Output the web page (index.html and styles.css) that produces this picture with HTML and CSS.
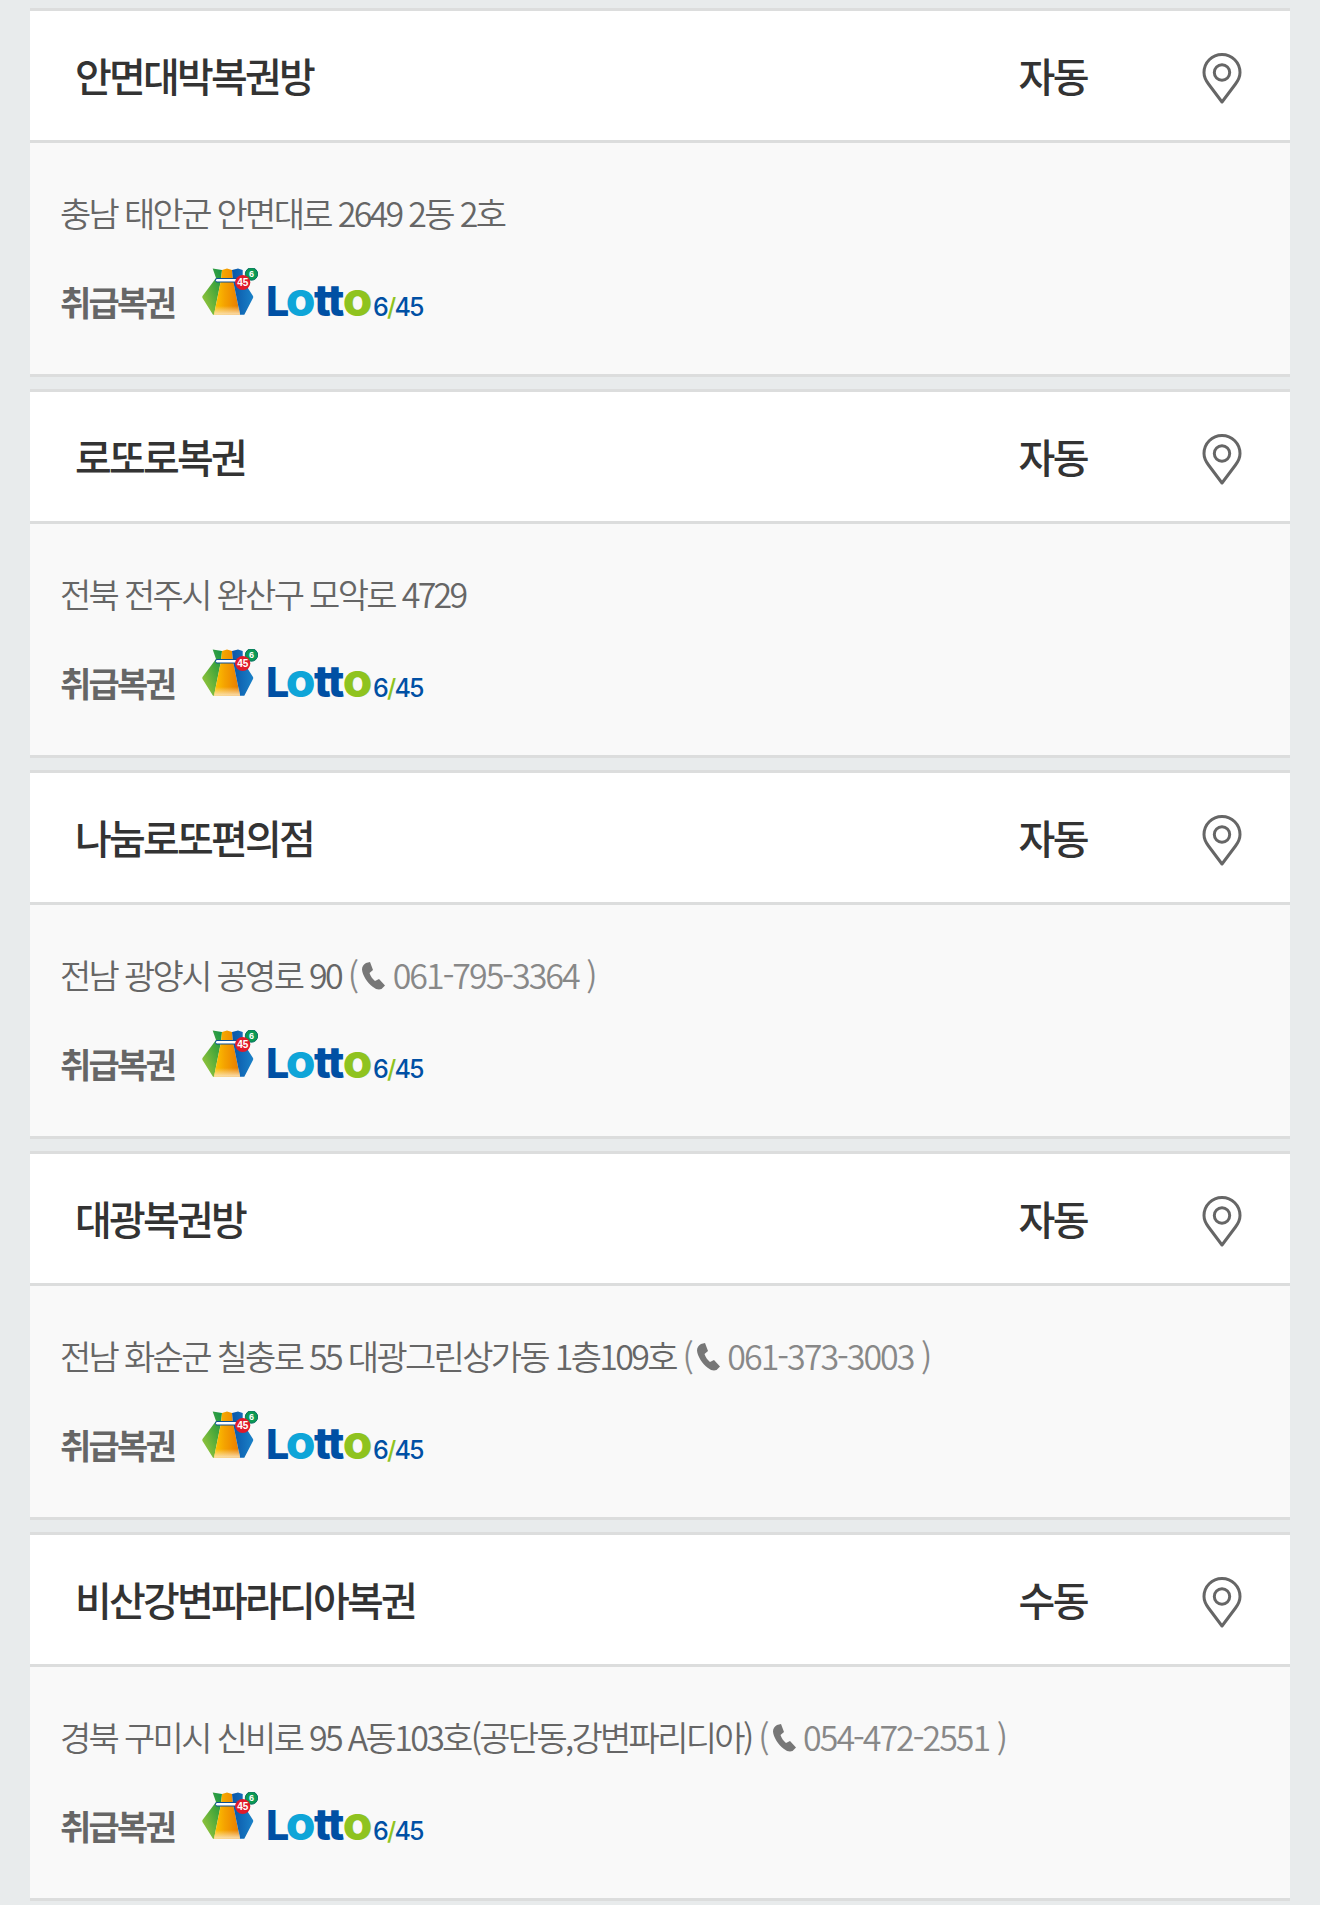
FILE: index.html
```html
<!DOCTYPE html>
<html lang="ko">
<head>
<meta charset="utf-8">
<title>판매점</title>
<link rel="stylesheet" href="styles.css">
</head>
<body>
<svg class="defs" width="0" height="0" aria-hidden="true">
  <defs>
    <linearGradient id="g1" x1="0" y1="1" x2="1" y2="0"><stop offset="0" stop-color="#a8cc3c"/><stop offset=".6" stop-color="#4aa83a"/><stop offset="1" stop-color="#12924a"/></linearGradient>
    <linearGradient id="g2" x1="0" y1="0" x2="1" y2="0"><stop offset="0" stop-color="#fdc800"/><stop offset=".4" stop-color="#f5a300"/><stop offset="1" stop-color="#e87a00"/></linearGradient>
    <linearGradient id="g3" x1="0" y1="0" x2="1" y2="0"><stop offset="0" stop-color="#0a55a8"/><stop offset="1" stop-color="#1a82c8"/></linearGradient>
    <linearGradient id="g4" x1="0" y1="0" x2="0" y2="1"><stop offset="0" stop-color="#fbe0b0" stop-opacity="0"/><stop offset="1" stop-color="#fbe0b0"/></linearGradient>
    <symbol id="bag" viewBox="0 0 56 48">
      <path d="M10.700 0.500 L20 2 L19 12 L12 46.700 L11 46.700 L0.500 30 Q0 29 0.500 28 L14 10Z" fill="url(#g1)"/>
      <path d="M20 2 L25 0.500 L30 2 L31 12 L38 46.700 L12 46.700 L19 12Z" fill="url(#g2)"/>
      <path d="M30 2 L36 0.500 L40.700 2 L40.700 12 L51 28 Q51.500 29 51 30 L42.300 46.700 L38 46.700 L31 12Z" fill="url(#g3)"/>
      <path d="M14 38 L37 38 L38 46.700 L12 46.700Z" fill="url(#g4)"/>
      <rect x="13.500" y="10.500" width="24" height="3.500" rx="1.500" fill="#fff" stroke="#0a4f94" stroke-width="1"/>
      <circle cx="49.500" cy="6" r="6.200" fill="#0b9a52" stroke="#0a6f66" stroke-width="1"/>
      <circle cx="40.700" cy="14.500" r="7.600" fill="#e01a2b"/>
      <text x="40.700" y="18" class="ball">45</text>
      <text x="49.500" y="9" class="ball ball-small">6</text>
    </symbol>
    <symbol id="pin" viewBox="0 0 40 52">
      <path d="M20 50 L6.500 32 C3.500 28 2 25 2 20.500 C2 10.500 10 2.500 20 2.500 C30 2.500 38 10.500 38 20.500 C38 25 36.500 28 33.500 32Z" fill="none" stroke="#666" stroke-width="3" stroke-linejoin="round"/>
      <circle cx="20" cy="20.500" r="7.700" fill="none" stroke="#666" stroke-width="3"/>
    </symbol>
    <symbol id="phone" viewBox="0 0 24 28">
      <path d="M5 1 L9 0 L12 8 L8.500 11 C9.500 14 11.500 17 14 19 L18 17 L24 23.500 L20.500 27 C18 28 15 27.500 12 25 C6 20.500 1.500 13 1 7.500 C1 4.500 2.500 2.500 5 1Z" fill="#777"/>
    </symbol>
  </defs>
</svg>
<main class="list">
  <article class="card">
    <header class="head"><h2 class="name">안면대박복권방</h2><span class="mode">자동</span><svg class="pin"><use href="#pin"/></svg></header>
    <div class="body">
      <p class="addr">충남 태안군 안면대로 2649 2동 2호</p>
      <div class="sold"><strong class="label">취급복권</strong><span class="logo"><svg class="bag"><use href="#bag"/></svg><span class="lotto"><b class="l-l">L</b><b class="l-o1">o</b><b class="l-t">tt</b><b class="l-o2">o</b></span><span class="game">6<i>/</i>45</span></span></div>
    </div>
  </article>
  <article class="card">
    <header class="head"><h2 class="name">로또로복권</h2><span class="mode">자동</span><svg class="pin"><use href="#pin"/></svg></header>
    <div class="body">
      <p class="addr">전북 전주시 완산구 모악로 4729</p>
      <div class="sold"><strong class="label">취급복권</strong><span class="logo"><svg class="bag"><use href="#bag"/></svg><span class="lotto"><b class="l-l">L</b><b class="l-o1">o</b><b class="l-t">tt</b><b class="l-o2">o</b></span><span class="game">6<i>/</i>45</span></span></div>
    </div>
  </article>
  <article class="card">
    <header class="head"><h2 class="name">나눔로또편의점</h2><span class="mode">자동</span><svg class="pin"><use href="#pin"/></svg></header>
    <div class="body">
      <p class="addr">전남 광양시 공영로 90 <span class="tel">(<svg class="phone"><use href="#phone"/></svg> 061-795-3364 )</span></p>
      <div class="sold"><strong class="label">취급복권</strong><span class="logo"><svg class="bag"><use href="#bag"/></svg><span class="lotto"><b class="l-l">L</b><b class="l-o1">o</b><b class="l-t">tt</b><b class="l-o2">o</b></span><span class="game">6<i>/</i>45</span></span></div>
    </div>
  </article>
  <article class="card">
    <header class="head"><h2 class="name">대광복권방</h2><span class="mode">자동</span><svg class="pin"><use href="#pin"/></svg></header>
    <div class="body">
      <p class="addr">전남 화순군 칠충로 55 대광그린상가동 1층109호 <span class="tel">(<svg class="phone"><use href="#phone"/></svg> 061-373-3003 )</span></p>
      <div class="sold"><strong class="label">취급복권</strong><span class="logo"><svg class="bag"><use href="#bag"/></svg><span class="lotto"><b class="l-l">L</b><b class="l-o1">o</b><b class="l-t">tt</b><b class="l-o2">o</b></span><span class="game">6<i>/</i>45</span></span></div>
    </div>
  </article>
  <article class="card">
    <header class="head"><h2 class="name">비산강변파라디아복권</h2><span class="mode">수동</span><svg class="pin"><use href="#pin"/></svg></header>
    <div class="body">
      <p class="addr">경북 구미시 신비로 95 A동103호(공단동,강변파리디아) <span class="tel">(<svg class="phone"><use href="#phone"/></svg> 054-472-2551 )</span></p>
      <div class="sold"><strong class="label">취급복권</strong><span class="logo"><svg class="bag"><use href="#bag"/></svg><span class="lotto"><b class="l-l">L</b><b class="l-o1">o</b><b class="l-t">tt</b><b class="l-o2">o</b></span><span class="game">6<i>/</i>45</span></span></div>
    </div>
  </article>
</main>
</body>
</html>
```
FILE: styles.css
```css
* { box-sizing: border-box; }
html, body { margin: 0; padding: 0; }
body {
  background: #e8ebec;
  font-family: "Noto Sans CJK KR", "Noto Sans", sans-serif;
  color: #333;
}
.defs { display: block; height: 0; }
.list {
  display: flex;
  flex-direction: column;
  gap: 12px;
  padding: 8px 30px 0;
}
.card {
  height: 369px;
  display: flex;
  flex-direction: column;
  border-top: 3px solid #dcdddd;
  border-bottom: 3px solid #dcdddd;
}
.head {
  height: 132px;
  flex: none;
  display: flex;
  align-items: center;
  padding: 0 46px 2px 45px;
  background: #fff;
  border-bottom: 3px solid #dcdddd;
}
.name {
  flex: 1;
  margin: 0;
  font-size: 40px;
  font-weight: 500;
  letter-spacing: -2.800px;
  color: #333;
}
.mode {
  font-size: 40px;
  font-weight: 500;
  letter-spacing: -2.600px;
  color: #333;
  margin-right: 115px;
}
.pin { width: 40px; height: 52px; flex: none; margin: 7px 2px 0 0; }
.body {
  flex: 1;
  padding: 0 30px;
  background: #f9f9f9;
}
.addr {
  margin: 47px 0 0;
  font-size: 34px;
  line-height: 46px;
  letter-spacing: -2.700px;
  color: #666;
  font-weight: 350;
}
.tel { color: #888; letter-spacing: -2px; }
.phone { width: 24px; height: 28px; margin-left: 4px; vertical-align: -1px; }
.sold {
  display: flex;
  align-items: baseline;
  margin-top: 32px;
}
.label {
  font-size: 34px;
  font-weight: 700;
  letter-spacing: -2.800px;
  color: #666;
  width: 142px;
}
.logo { display: flex; align-items: baseline; }
.bag { width: 56px; height: 48px; }
.lotto {
  margin-left: 8px;
  font-family: "Inter", sans-serif;
  line-height: 1;
}
.lotto b { font-weight: 800; }
.l-l { font-size: 41px; letter-spacing: -3.500px; color: #0050a4; }
.l-o1 { font-size: 48px; letter-spacing: -1.500px; color: #0fa5d8; }
.l-t { font-size: 44px; letter-spacing: -1.500px; color: #0050a4; }
.l-o2 { font-size: 48px; letter-spacing: -1.500px; color: #8fc31f; }
.game {
  margin-left: 2px;
  font-family: "Inter", sans-serif;
  font-size: 25px;
  font-weight: 500;
  line-height: 1;
  letter-spacing: -1.800px;
  color: #0050a4;
}
.game i { color: #8fc31f; font-style: normal; }
.ball {
  font-family: "Liberation Sans", sans-serif;
  font-size: 10px;
  font-weight: 700;
  fill: #fff;
  text-anchor: middle;
}
.ball-small { font-size: 9px; }
```
